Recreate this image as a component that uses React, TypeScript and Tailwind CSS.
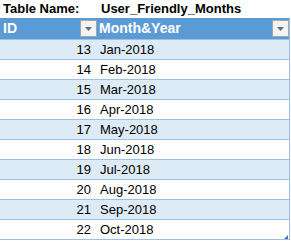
import React from 'react';

const rows = [
  { id: 13, label: 'Jan-2018' },
  { id: 14, label: 'Feb-2018' },
  { id: 15, label: 'Mar-2018' },
  { id: 16, label: 'Apr-2018' },
  { id: 17, label: 'May-2018' },
  { id: 18, label: 'Jun-2018' },
  { id: 19, label: 'Jul-2018' },
  { id: 20, label: 'Aug-2018' },
  { id: 21, label: 'Sep-2018' },
  { id: 22, label: 'Oct-2018' },
];

function FilterButton() {
  return (
    <div className="w-[17px] h-[17px] bg-[#f3f3f3] border border-[#a6a6a6] flex items-center justify-center">
      <svg width="7" height="4" viewBox="0 0 7 4">
        <polygon points="0,0 7,0 3.5,4" fill="#6b6b6b" />
      </svg>
    </div>
  );
}

export default function App() {
  return (
    <div className="w-[291px] h-[241px] bg-white overflow-hidden font-['Liberation_Sans',Arial,sans-serif] text-black">
      <div className="h-[18px] flex items-center text-[13px] font-bold">
        <span className="w-[101px] pl-[3px]">Table Name:</span>
        <span>User_Friendly_Months</span>
      </div>

      <div className="relative w-[290px] border-r border-[#9bc2e6]">
        <div className="h-[22px] flex bg-[#5b9bd5] border-b border-[#9bc2e6] text-white text-[14px] font-bold">
          <div className="w-[97px] flex items-center justify-between pl-[3px]">
            <span>ID</span>
            <FilterButton />
          </div>
          <div className="flex-1 flex items-center justify-between pl-[2px]">
            <span>Month&amp;Year</span>
            <FilterButton />
          </div>
        </div>

        {rows.map((row, i) => (
          <div
            key={row.id}
            className={`h-[20px] flex items-center border-b border-[#9bc2e6] text-[13px] ${i % 2 === 0 ? 'bg-[#ddebf7]' : 'bg-white'}`}
          >
            <span className="w-[91px] text-right">{row.id}</span>
            <span className="pl-[9px]">{row.label}</span>
          </div>
        ))}

        {/* resize handle */}
        <svg className="absolute right-[1px] bottom-[1px]" width="4" height="4" viewBox="0 0 4 4">
          <polygon points="4,0 4,4 0,4" fill="#4472c4" />
        </svg>
      </div>
    </div>
  );
}
